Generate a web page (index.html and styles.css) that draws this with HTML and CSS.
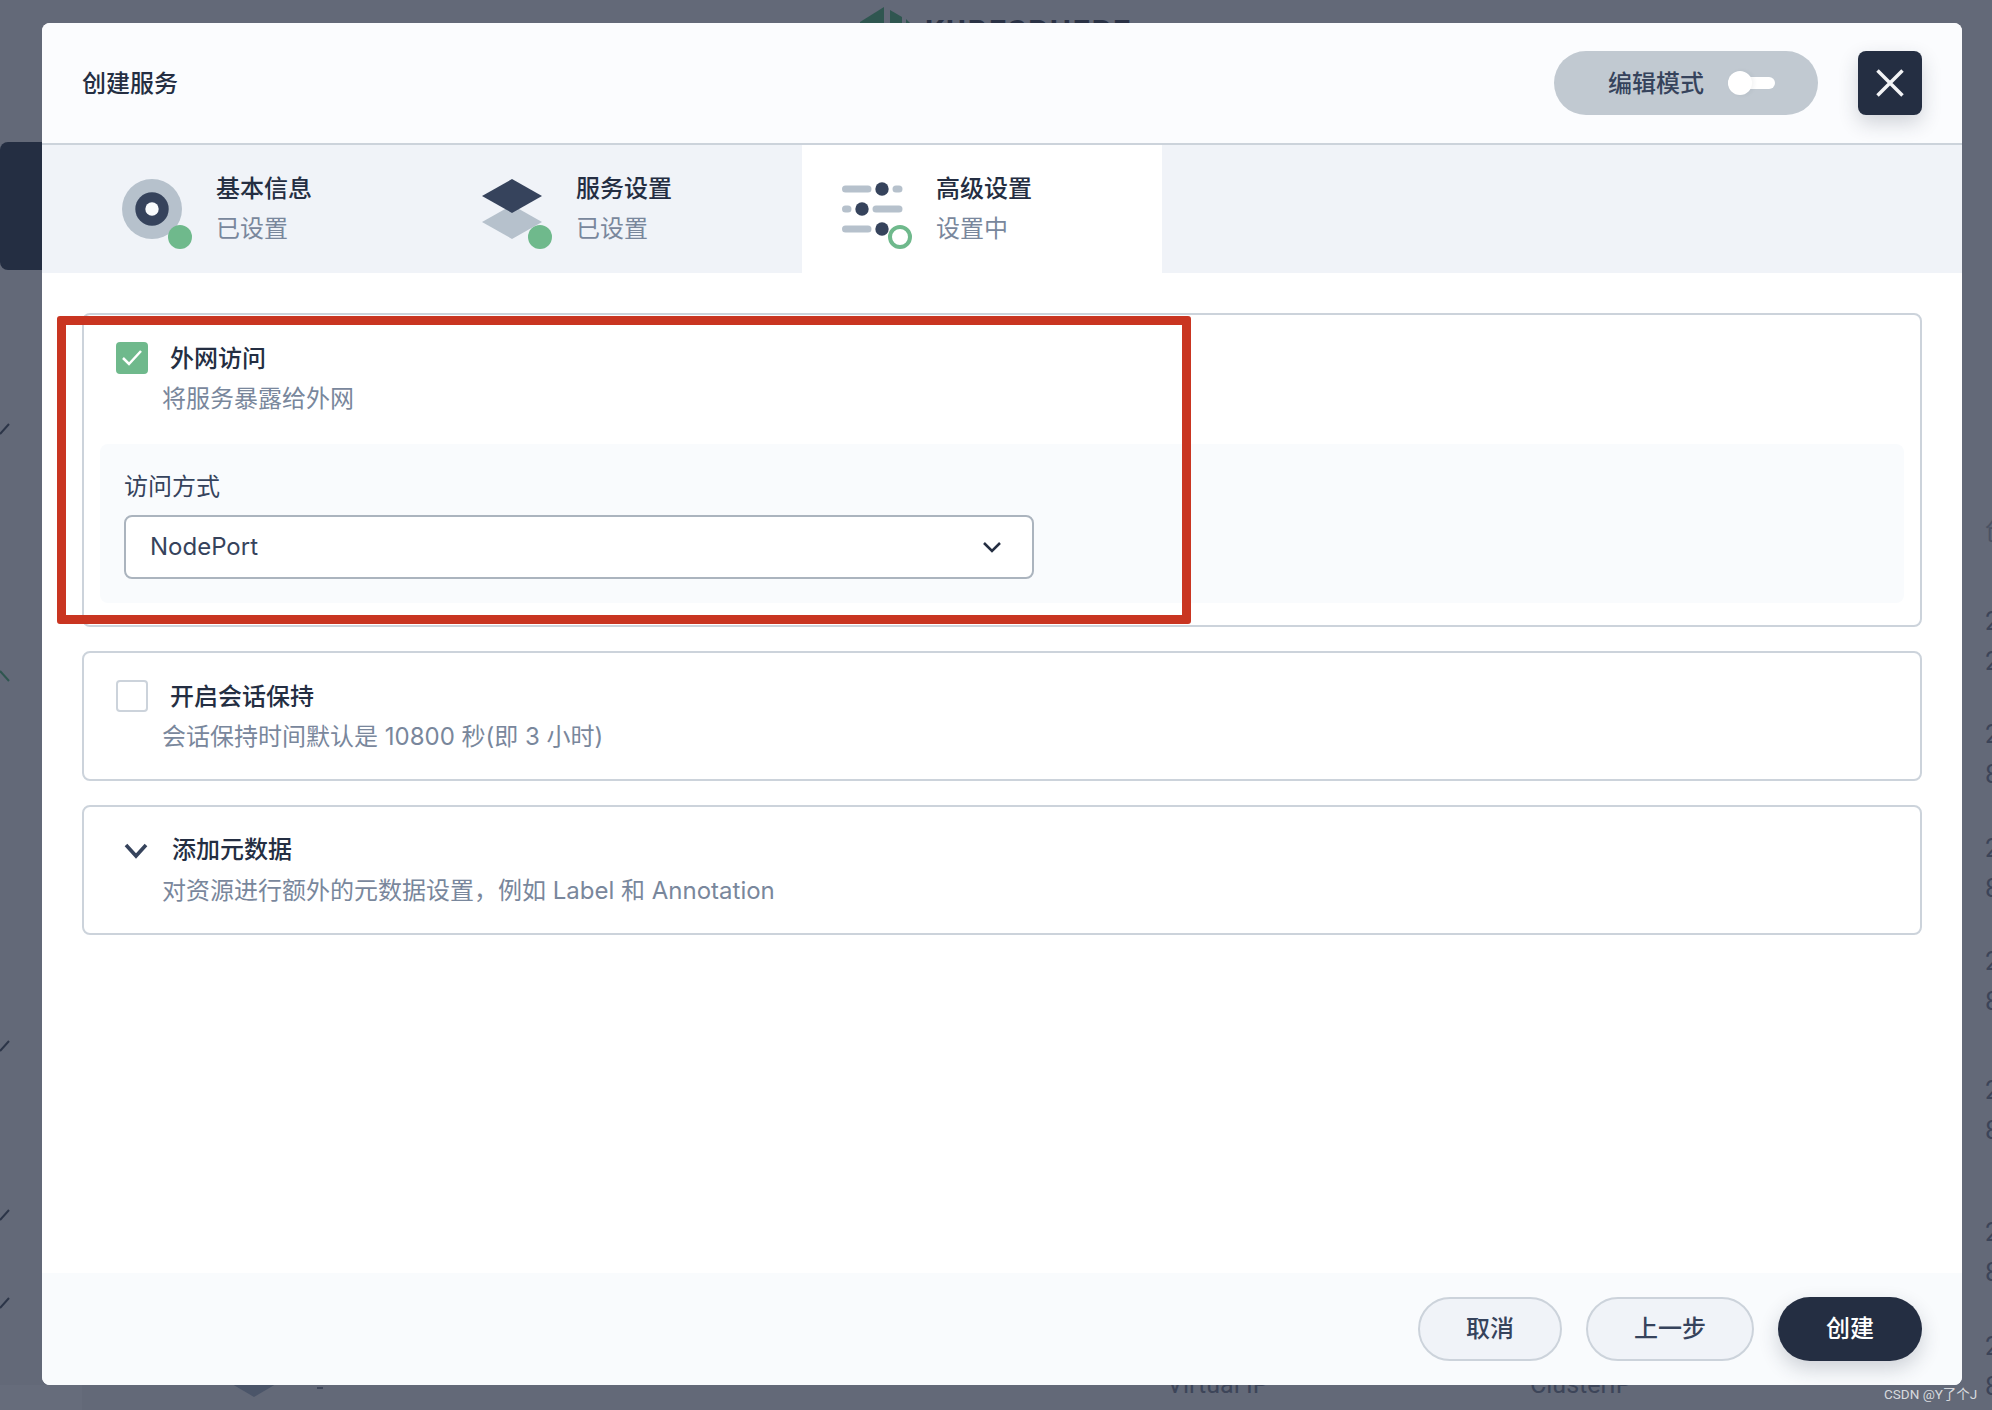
FILE: index.html
```html
<!DOCTYPE html>
<html lang="zh-CN">
<head>
<meta charset="utf-8">
<title>创建服务</title>
<link rel="stylesheet" href="styles.css">
</head>
<body>
<div class="backdrop">
  <div class="bg-nav-active"></div>
  <svg class="bg-logo" width="60" height="24" viewBox="0 0 60 24"><path d="M0 15 24 0V16H0Z" fill="#2f5650"/><path d="M30 3 42 10V16H30Z" fill="#2f5650"/><path d="M46 12 50 16H46Z" fill="#2f5650"/></svg>
  <div class="bg-logo-text">KUBESPHERE</div>
  <svg class="bg-marks" width="12" height="1410" viewBox="0 0 12 1410">
    <path d="M0 434 9 424M0 1051 9 1041M0 1220 9 1210M0 1308 9 1298M0 1396 9 1386" stroke="#2c3548" stroke-width="2" fill="none"/>
    <path d="M0 671 9 681" stroke="#2f5650" stroke-width="2" fill="none"/>
  </svg>
  <svg class="bg-diamond" width="44" height="14" viewBox="0 0 44 14"><path d="M0 0H44L22 13Z" fill="#4b5569"/></svg>
  <div class="bg-dash"></div>
  <div class="bg-text bg-virtual">Virtual IP</div>
  <div class="bg-text bg-cluster">ClusterIP</div>
  <div class="bg-col">
    <div class="bg-col-head">创</div>
    <div class="bg-row">2<br>2</div>
    <div class="bg-row">2<br>8</div>
    <div class="bg-row">2<br>8</div>
    <div class="bg-row">2<br>8</div>
    <div class="bg-row">2<br>8</div>
    <div class="bg-row">2<br>8</div>
    <div class="bg-row">2<br>8</div>
  </div>
  <div class="bg-left-col"></div>
</div>

<main class="modal">
  <header class="modal-head">
    <h1 class="modal-title">创建服务</h1>
    <div class="mode-pill">
      <span>编辑模式</span>
      <span class="toggle"><span class="toggle-knob"></span></span>
    </div>
    <button class="close-btn" type="button" aria-label="关闭">
      <svg width="28" height="28" viewBox="0 0 28 28"><path d="M1.500 1.500 26.500 26.500M26.500 1.500 1.500 26.500" stroke="#f3f4f6" stroke-width="3.500" fill="none"/></svg>
    </button>
  </header>

  <nav class="tabs">
    <div class="tab">
      <svg class="tab-icon" width="72" height="72" viewBox="0 0 72 72">
        <circle cx="30" cy="30" r="30" fill="#b6c1cc"/>
        <circle cx="30" cy="30" r="16.7" fill="#36435c"/>
        <circle cx="30" cy="30" r="6.7" fill="#f9fbfd"/>
        <circle cx="58" cy="58" r="12" fill="#6fb98c"/>
      </svg>
      <div class="tab-text"><div class="tab-title">基本信息</div><div class="tab-sub">已设置</div></div>
    </div>
    <div class="tab">
      <svg class="tab-icon" width="72" height="72" viewBox="0 0 72 72">
        <path d="M30 26 60 43 30 60 0 43Z" fill="#b6c1cc"/>
        <path d="M30 0 60 17 30 34 0 17Z" fill="#36435c"/>
        <circle cx="58" cy="58" r="12" fill="#6fb98c"/>
      </svg>
      <div class="tab-text"><div class="tab-title">服务设置</div><div class="tab-sub">已设置</div></div>
    </div>
    <div class="tab tab-active">
      <svg class="tab-icon" width="72" height="72" viewBox="0 0 72 72">
        <path d="M3.500 10H26M54 10H57M3.500 30H6M34 30H57M3.500 50H26" stroke="#b6c1cc" stroke-width="7" stroke-linecap="round" fill="none"/>
        <circle cx="40" cy="10" r="6.700" fill="#36435c"/>
        <circle cx="20" cy="30" r="6.700" fill="#36435c"/>
        <circle cx="40" cy="50" r="6.700" fill="#36435c"/>
        <circle cx="58" cy="58" r="10" fill="#fff" stroke="#6fb98c" stroke-width="4"/>
      </svg>
      <div class="tab-text"><div class="tab-title">高级设置</div><div class="tab-sub">设置中</div></div>
    </div>
  </nav>

  <section class="modal-body">
    <div class="card">
      <div class="card-row">
        <span class="check check-on">
          <svg width="22" height="18" viewBox="0 0 22 18"><path d="M2 9 8 15 20 2" stroke="#fff" stroke-width="2.500" fill="none"/></svg>
        </span>
        <span class="card-title">外网访问</span>
      </div>
      <p class="card-desc">将服务暴露给外网</p>
      <div class="panel">
        <label class="field-label">访问方式</label>
        <div class="select">
          <span>NodePort</span>
          <svg width="20" height="12" viewBox="0 0 20 12"><path d="M2 2 10 10 18 2" stroke="#242e42" stroke-width="2.500" fill="none"/></svg>
        </div>
      </div>
    </div>

    <div class="card">
      <div class="card-row">
        <span class="check"></span>
        <span class="card-title">开启会话保持</span>
      </div>
      <p class="card-desc">会话保持时间默认是 10800 秒(即 3 小时)</p>
    </div>

    <div class="card">
      <div class="card-row card-row-toggle">
        <svg class="chevron" width="24" height="16" viewBox="0 0 24 16"><path d="M2 2 12 13 22 2" stroke="#36435c" stroke-width="3.600" fill="none"/></svg>
        <span class="card-title card-title-raised">添加元数据</span>
      </div>
      <p class="card-desc">对资源进行额外的元数据设置，例如 Label 和 Annotation</p>
    </div>

    <div class="highlight"></div>
  </section>

  <footer class="modal-foot">
    <button class="btn" type="button">取消</button>
    <button class="btn btn-wide" type="button">上一步</button>
    <button class="btn btn-primary" type="button">创建</button>
  </footer>
</main>

<div class="watermark">CSDN @Y了个J</div>
</body>
</html>
```

FILE: styles.css
```css
* { box-sizing: border-box; }

html, body { margin: 0; height: 100%; }

body {
  width: 1992px;
  height: 1410px;
  overflow: hidden;
  position: relative;
  padding: 23px 30px 25px 42px;
  background: #636978;
  font-family: Inter, "Noto Sans CJK SC", sans-serif;
  font-size: 24px;
  line-height: 32px;
  color: #242e42;
}

/* Dimmed page behind the dialog */
.backdrop { position: absolute; inset: 0; overflow: hidden; }
.bg-nav-active {
  position: absolute; left: 0; top: 142px;
  width: 50px; height: 128px;
  background: #242e42; border-radius: 8px;
}
.bg-logo { position: absolute; left: 860px; top: 7px; }
.bg-logo-text {
  position: absolute; left: 925px; top: 13px;
  font-family: Roboto, sans-serif;
  font-size: 30px; line-height: 36px; font-weight: 700;
  letter-spacing: 2px; color: #2a3245;
}
.bg-marks { position: absolute; left: 0; top: 0; }
.bg-diamond { position: absolute; left: 232px; top: 1384px; }
.bg-dash { position: absolute; left: 317px; top: 1387px; width: 6px; height: 2px; background: #3f475a; }
.bg-text { position: absolute; top: 1369px; font-family: Roboto, sans-serif; font-size: 25px; color: #3d4559; }
.bg-virtual { left: 1167px; }
.bg-cluster { left: 1530px; }
.bg-col {
  position: absolute; left: 1985px; top: 511px;
  display: grid;
  grid-template-rows: 90px 113px 114px 113px 129px 142px 114px 100px;
  font-family: Roboto, "Noto Sans CJK SC", sans-serif;
  font-size: 26px; line-height: 40px; color: #3c4458;
}
.bg-col-head { color: #4b5263; }
.bg-left-col { position: absolute; left: 0; top: 1385px; width: 82px; height: 25px; background: #666c7b; }

/* Dialog */
.modal {
  position: relative;
  display: flex;
  flex-direction: column;
  width: 1920px;
  height: 1362px;
  background: #fff;
  border-radius: 8px;
  overflow: hidden;
}

.modal-head {
  display: flex;
  align-items: center;
  flex: none;
  height: 122px;
  padding: 0 40px;
  background: #fbfcfe;
  border-bottom: 2px solid #ccd3db;
}
.modal-title {
  margin: 1px auto 0 0;
  font-size: 24px;
  line-height: 32px;
  font-weight: 500;
}
.mode-pill {
  display: flex;
  align-items: center;
  width: 264px;
  height: 64px;
  padding: 1px 0 0 54px;
  border-radius: 32px;
  background: #c1c9d1;
  color: #36435c;
  font-weight: 500;
}
.toggle {
  position: relative;
  width: 47px;
  height: 12px;
  margin: -1px 0 0 24px;
  border-radius: 6px;
  background: #fff;
}
.toggle-knob {
  position: absolute; left: 0; top: -6px;
  width: 24px; height: 24px;
  border-radius: 50%;
  background: #fff;
  box-shadow: 2px 0 4px rgba(36, 46, 66, .06);
}
.close-btn {
  display: flex;
  align-items: center;
  justify-content: center;
  width: 64px;
  height: 64px;
  margin-left: 40px;
  padding: 0;
  border: 0;
  border-radius: 8px;
  background: #242e42;
  box-shadow: 0 8px 20px rgba(36, 46, 66, .2);
}

.tabs {
  display: flex;
  flex: none;
  height: 128px;
  padding-left: 40px;
  background: #f0f3f8;
}
.tab {
  display: flex;
  width: 360px;
  padding: 28px 0 0 40px;
}
.tab-active { background: #fff; }
.tab-icon { flex: none; margin: 6px 22px 0 0; }
.tab-title { font-weight: 500; line-height: 32px; color: #242e42; }
.tab-sub { margin-top: 8px; line-height: 32px; color: #79879c; }

.modal-body {
  position: relative;
  flex: 1;
  display: flex;
  flex-direction: column;
  gap: 24px;
  padding: 40px;
}
.card {
  padding: 28px 16px 26px;
  border: 2px solid #ccd3db;
  border-radius: 8px;
  background: #fff;
}
.card-row {
  display: flex;
  align-items: center;
  height: 32px;
  padding-left: 16px;
}
.card-row-toggle { padding-left: 24px; }
.check {
  flex: none;
  display: flex;
  align-items: center;
  justify-content: center;
  width: 32px;
  height: 32px;
  margin-right: 22px;
  border: 2px solid #ccd3db;
  border-radius: 4px;
  background: #fff;
  transform: translateY(-1px);
}
.check-on { border: 0; background: #6fb98c; }
.chevron { flex: none; margin-right: 24px; }
.card-title { font-weight: 500; color: #242e42; }
.card-title-raised { margin-top: -2px; }
.card-desc {
  margin: 8px 0 0;
  padding-left: 62px;
  line-height: 32px;
  color: #79879c;
}
.card:first-child { padding-bottom: 22px; }

.panel {
  margin-top: 29px;
  padding: 27px 24px 24px;
  border-radius: 8px;
  background: #f9fbfd;
}
.field-label { display: block; line-height: 32px; color: #36435c; }
.select {
  display: flex;
  align-items: center;
  justify-content: space-between;
  width: 910px;
  height: 64px;
  margin-top: 12px;
  padding: 0 30px 0 24px;
  border: 2px solid #abb4be;
  border-radius: 8px;
  background: #fff;
  font-size: 24px;
  color: #36435c;
}

.highlight {
  position: absolute;
  left: 15px; top: 43px;
  width: 1134px; height: 308px;
  border: 9px solid #c93521;
  border-radius: 3px;
  pointer-events: none;
}

.modal-foot {
  flex: none;
  display: flex;
  justify-content: flex-end;
  gap: 24px;
  height: 112px;
  padding: 24px 40px;
  background: #f9fbfd;
}
.btn {
  width: 144px;
  height: 64px;
  padding: 0;
  border: 2px solid #ccd3db;
  border-radius: 32px;
  background: #f0f3f8;
  font: 500 24px/32px Inter, "Noto Sans CJK SC", sans-serif;
  color: #36435c;
}
.btn-wide { width: 168px; }
.btn-primary {
  border: 0;
  background: #242e42;
  color: #fff;
  box-shadow: 0 8px 20px rgba(36, 46, 66, .2);
}

.watermark {
  position: absolute;
  left: 1884px; top: 1386px;
  font-family: Roboto, "Noto Sans CJK SC", sans-serif;
  font-size: 13.5px;
  line-height: 16px;
  color: #d7d9de;
}
```
